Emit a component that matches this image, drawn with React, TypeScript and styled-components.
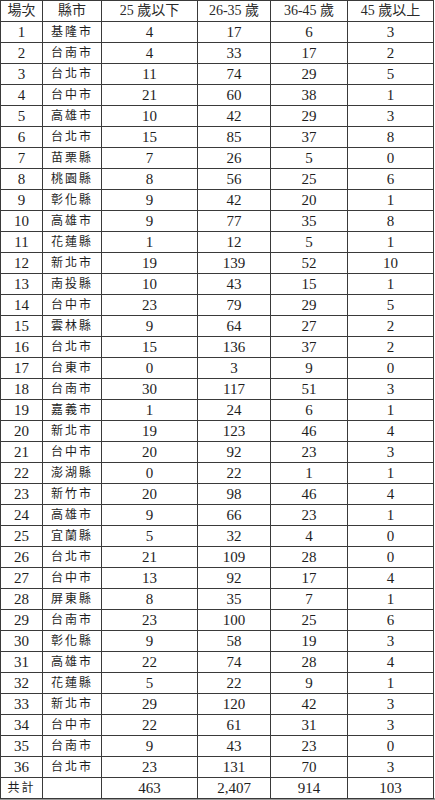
import styled, { createGlobalStyle } from 'styled-components';

const GlobalStyle = createGlobalStyle`
  html, body {
    margin: 0;
    padding: 0;
    background: #ffffff;
  }
  body {
    font-family: "Liberation Serif", "Noto Sans CJK TC", serif;
    color: #1e1e1e;
  }
`;

type Row = [number, string, number, number, number, number];

const rows: Row[] = [
  [1, '基隆市', 4, 17, 6, 3],
  [2, '台南市', 4, 33, 17, 2],
  [3, '台北市', 11, 74, 29, 5],
  [4, '台中市', 21, 60, 38, 1],
  [5, '高雄市', 10, 42, 29, 3],
  [6, '台北市', 15, 85, 37, 8],
  [7, '苗栗縣', 7, 26, 5, 0],
  [8, '桃園縣', 8, 56, 25, 6],
  [9, '彰化縣', 9, 42, 20, 1],
  [10, '高雄市', 9, 77, 35, 8],
  [11, '花蓮縣', 1, 12, 5, 1],
  [12, '新北市', 19, 139, 52, 10],
  [13, '南投縣', 10, 43, 15, 1],
  [14, '台中市', 23, 79, 29, 5],
  [15, '雲林縣', 9, 64, 27, 2],
  [16, '台北市', 15, 136, 37, 2],
  [17, '台東市', 0, 3, 9, 0],
  [18, '台南市', 30, 117, 51, 3],
  [19, '嘉義市', 1, 24, 6, 1],
  [20, '新北市', 19, 123, 46, 4],
  [21, '台中市', 20, 92, 23, 3],
  [22, '澎湖縣', 0, 22, 1, 1],
  [23, '新竹市', 20, 98, 46, 4],
  [24, '高雄市', 9, 66, 23, 1],
  [25, '宜蘭縣', 5, 32, 4, 0],
  [26, '台北市', 21, 109, 28, 0],
  [27, '台中市', 13, 92, 17, 4],
  [28, '屏東縣', 8, 35, 7, 1],
  [29, '台南市', 23, 100, 25, 6],
  [30, '彰化縣', 9, 58, 19, 3],
  [31, '高雄市', 22, 74, 28, 4],
  [32, '花蓮縣', 5, 22, 9, 1],
  [33, '新北市', 29, 120, 42, 3],
  [34, '台中市', 22, 61, 31, 3],
  [35, '台南市', 9, 43, 23, 0],
  [36, '台北市', 23, 131, 70, 3],
];

const colWidths = [42, 59, 96, 73, 77, 86];

const App = () => {
  return (
    <>
      <GlobalStyle />
      <Frame>
        <Table>
          <colgroup>
            {colWidths.map((w, i) => (
              <col key={i} style={{ width: w }} />
            ))}
          </colgroup>
          <thead>
            <tr>
              <HeadCell>場次</HeadCell>
              <HeadCell>縣市</HeadCell>
              <HeadCell>25 歲以下</HeadCell>
              <HeadCell>26-35 歲</HeadCell>
              <HeadCell>36-45 歲</HeadCell>
              <HeadCell>45 歲以上</HeadCell>
            </tr>
          </thead>
          <tbody>
            {rows.map(([no, city, a, b, c, d]) => (
              <tr key={no}>
                <Cell>{no}</Cell>
                <CityCell>{city}</CityCell>
                <Cell>{a}</Cell>
                <Cell>{b}</Cell>
                <Cell>{c}</Cell>
                <Cell>{d}</Cell>
              </tr>
            ))}
            <tr>
              <CityCell>共計</CityCell>
              <Cell />
              <Cell>463</Cell>
              <Cell>2,407</Cell>
              <Cell>914</Cell>
              <Cell>103</Cell>
            </tr>
          </tbody>
        </Table>
      </Frame>
    </>
  );
};

const Frame = styled.div`
  width: 435px;
  height: 800px;
  box-sizing: border-box;
  border-bottom: 2px solid #9a9a9a;
  background: #ffffff;
`;

const Table = styled.table`
  width: 434px;
  table-layout: fixed;
  border-collapse: collapse;
`;

const Cell = styled.td`
  height: 20px;
  padding: 0;
  border: 1px solid #3a3a3a;
  text-align: center;
  vertical-align: middle;
  font-size: 15px;
  line-height: 20px;
  white-space: nowrap;
  overflow: hidden;
`;

const CityCell = styled(Cell)`
  font-size: 12px;
  letter-spacing: 2px;
`;

const HeadCell = styled.td`
  height: 20px;
  padding: 0;
  border: 1px solid #3a3a3a;
  text-align: center;
  vertical-align: middle;
  font-size: 14px;
  line-height: 20px;
  white-space: nowrap;
  overflow: hidden;
  color: #2a2a2a;
`;

export default App;
